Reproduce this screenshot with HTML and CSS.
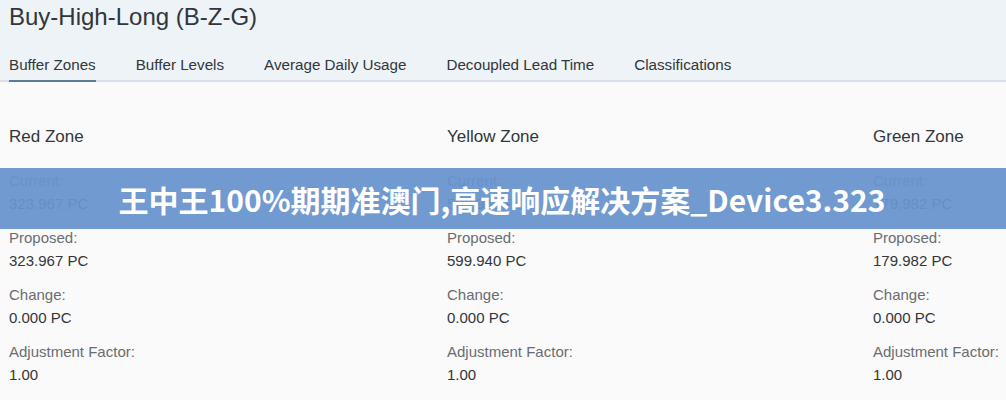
FILE: index.html
```html
<!DOCTYPE html>
<html lang="en">
  <head>
    <meta charset="UTF-8" />
    <meta name="viewport" content="width=device-width, initial-scale=1.0" />
    <title>Buy-High-Long (B-Z-G)</title>
    <link rel="stylesheet" href="styles.css">
  </head>
  <body>
    <header class="header">
      <h1 class="title">Buy-High-Long (B-Z-G)</h1>
      <nav class="tabs">
        <a href="#" class="tab active">Buffer Zones</a>
        <a href="#" class="tab">Buffer Levels</a>
        <a href="#" class="tab">Average Daily Usage</a>
        <a href="#" class="tab">Decoupled Lead Time</a>
        <a href="#" class="tab">Classifications</a>
      </nav>
    </header>

    <main class="zones">
      <section class="zone zone-red">
        <h2 class="zone-title">Red Zone</h2>
        <dl class="fields">
          <dt>Current:</dt><dd>323.967 PC</dd>
          <dt>Proposed:</dt><dd>323.967 PC</dd>
          <dt>Change:</dt><dd>0.000 PC</dd>
          <dt>Adjustment Factor:</dt><dd>1.00</dd>
        </dl>
      </section>
      <section class="zone zone-yellow">
        <h2 class="zone-title">Yellow Zone</h2>
        <dl class="fields">
          <dt>Current:</dt><dd>599.940 PC</dd>
          <dt>Proposed:</dt><dd>599.940 PC</dd>
          <dt>Change:</dt><dd>0.000 PC</dd>
          <dt>Adjustment Factor:</dt><dd>1.00</dd>
        </dl>
      </section>
      <section class="zone zone-green">
        <h2 class="zone-title">Green Zone</h2>
        <dl class="fields">
          <dt>Current:</dt><dd>179.982 PC</dd>
          <dt>Proposed:</dt><dd>179.982 PC</dd>
          <dt>Change:</dt><dd>0.000 PC</dd>
          <dt>Adjustment Factor:</dt><dd>1.00</dd>
        </dl>
      </section>
    </main>

    <!-- banda superpuesta sobre el contenido -->
    <div class="banner">王中王100%期期准澳门,高速响应解决方案_Device3.323</div>
  </body>
</html>
```

FILE: styles.css
```css
* {
  margin: 0;
  padding: 0;
  box-sizing: border-box;
}

body {
  font-family: "Liberation Sans", Arial, sans-serif;
  background-color: #fafafa;
  color: #32363a;
  width: 1006px;
  height: 400px;
  overflow: hidden;
  position: relative;
}

.header {
  background-color: #eef3f7;
  border-bottom: 2px solid #d9e0e7;
  padding: 0 9px;
}

.title {
  font-size: 24px;
  font-weight: normal;
  color: #32363a;
  line-height: 28px;
  padding-top: 3px;
}

.tabs {
  display: flex;
  gap: 40px;
  margin-top: 25px;
}

.tab {
  font-size: 15.2px;
  color: #32363a;
  text-decoration: none;
  line-height: 18px;
  padding-bottom: 6px;
  margin-bottom: -2px;
  border-bottom: 2px solid transparent;
}

.tab.active {
  border-bottom-color: #5b7c97;
}

.zones {
  display: grid;
  grid-template-columns: 438px 426px 1fr;
  padding: 0 9px;
}

.zone {
  min-width: 0;
  white-space: nowrap;
}

.zone-title {
  font-size: 17px;
  font-weight: normal;
  color: #32363a;
  line-height: 20px;
  padding-top: 45px;
  padding-bottom: 25px;
}

.fields dt {
  font-size: 15px;
  color: #6a6d70;
  line-height: 18px;
}

.fields dd {
  font-size: 15px;
  color: #32363a;
  line-height: 18px;
  margin-top: 5px;
  margin-bottom: 16px;
}

.banner {
  position: absolute;
  left: 0;
  right: 0;
  top: 168px;
  height: 61px;
  background-color: rgba(104, 148, 206, 0.94);
  color: #fff;
  font-family: "Noto Sans CJK SC", "Noto Sans", sans-serif;
  font-weight: bold;
  font-size: 30px;
  display: flex;
  align-items: center;
  justify-content: center;
  padding-right: 2px;
}
```
